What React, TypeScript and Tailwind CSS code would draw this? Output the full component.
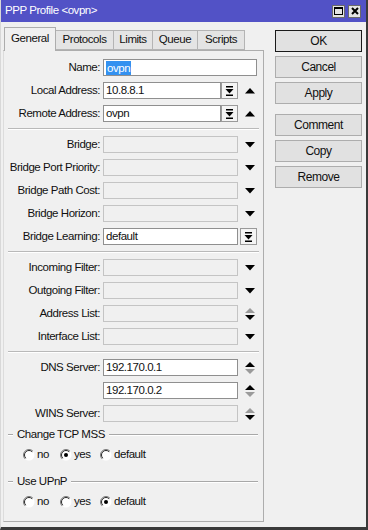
import type { ReactNode } from 'react'

const Tri = ({ dir = 'down', color = '#000' }: { dir?: 'up' | 'down'; color?: string }) => (
  <svg width="10" height="6" viewBox="0 0 10 6">
    {dir === 'down' ? <polygon points="0,0 10,0 5,5.5" fill={color} /> : <polygon points="0,5.5 10,5.5 5,0" fill={color} />}
  </svg>
)

const UpDown = ({ top, bottom }: { top: string; bottom: string }) => (
  <svg width="10" height="12" viewBox="0 0 10 12">
    <polygon points="0,5 10,5 5,0" fill={top} />
    <polygon points="0,7 10,7 5,12" fill={bottom} />
  </svg>
)

const DropBtn = ({ className = '' }: { className?: string }) => (
  <div className={`w-[17px] h-[17px] border border-[#9a9a9a] bg-[#f4f4f4] flex items-center justify-center ${className}`}>
    <svg width="9" height="10" viewBox="0 0 9 10">
      <rect x="1" y="0" width="7" height="1.5" fill="#000" />
      <polygon points="0.5,3 8.5,3 4.5,7.5" fill="#000" />
      <rect x="1" y="8.5" width="7" height="1.5" fill="#000" />
    </svg>
  </div>
)

const Field = ({ w, value, disabled, selected }: { w: string; value?: string; disabled?: boolean; selected?: boolean }) => (
  <div
    className={`${w} h-[17px] border flex items-center pl-[2px] ${
      disabled ? 'bg-[#f0f0f0] border-[#c4c4c4]' : 'bg-white border-[#8f8f8f]'
    }`}
  >
    {selected ? <span className="bg-[#3391f0] text-white px-[1px] leading-[14px]">{value}</span> : value}
  </div>
)

const Row = ({ label, children }: { label?: string; children: ReactNode }) => (
  <div className="flex items-center h-[17px]">
    <div className="w-[99px] pr-[3px] text-right whitespace-nowrap">{label}</div>
    {children}
  </div>
)

const Arrow = ({ children }: { children: ReactNode }) => (
  <div className="w-[24px] flex justify-center">{children}</div>
)

const Sep = () => <div className="mx-[4px] h-[2px] border-t border-[#b9b9b9] border-b border-b-white" />

const Radio = ({ checked }: { checked?: boolean }) => (
  <svg width="12" height="12" viewBox="0 0 12 12">
    <circle cx="6" cy="6" r="5.5" fill="#fff" />
    <path d="M 9.9 2.1 A 5.5 5.5 0 0 0 2.1 9.9" fill="none" stroke="#7a7a7a" strokeWidth="1" />
    <path d="M 9.2 2.8 A 4.5 4.5 0 0 0 2.8 9.2" fill="none" stroke="#2a2a2a" strokeWidth="1" />
    {checked && <circle cx="6" cy="6" r="2" fill="#000" />}
  </svg>
)

const Group = ({ title, value }: { title: string; value: string }) => (
  <>
    <div className="flex items-center h-[12px] mt-[1px] mx-[4px]">
      <div className="w-[5px] h-[2px] border-t border-[#a8a8a8] border-b border-b-white" />
      <span className="px-[4px] whitespace-nowrap">{title}</span>
      <div className="flex-1 mr-[1px] h-[2px] border-t border-[#a8a8a8] border-b border-b-white" />
    </div>
    <div className="flex items-center h-[14px] mt-[1px] ml-[19px]">
      {[
        ['no', 'w-[37px]'],
        ['yes', 'w-[40px]'],
        ['default', 'w-[60px]'],
      ].map(([opt, w]) => (
        <div key={opt} className={`${w} flex items-center gap-[2px]`}>
          <Radio checked={opt === value} />
          <span>{opt}</span>
        </div>
      ))}
    </div>
  </>
)

const tabs = ['Protocols', 'Limits', 'Queue', 'Scripts']
const tabW = ['w-[58px]', 'w-[39px]', 'w-[45px]', 'w-[47px]']

const Btn = ({ label, def }: { label: string; def?: boolean }) => (
  <div
    className={`h-[22px] flex items-center justify-center bg-[#e1e1e1] border ${
      def ? 'border-[#1a1a1a]' : 'border-[#adadad]'
    } text-[12px]`}
  >
    {label}
  </div>
)

export default function App() {
  return (
    <div className="w-[368px] h-[530px] bg-[#f0f0f0] border-l border-l-[#d8d8d8] border-r-2 border-r-[#3a3a3a] border-b-[3px] border-b-[#3a3a3a] flex flex-col text-[11.5px] text-[#111] font-['Liberation_Sans',Arial,sans-serif] tracking-[-0.45px] overflow-hidden">
      {/* title bar */}
      <div className="h-[22px] shrink-0 bg-[#5252c6] flex items-center pl-[4px] pr-[5px] text-white text-[11.5px]">
        <span className="flex-1">PPP Profile &lt;ovpn&gt;</span>
        <div className="flex gap-[3px]">
          <div className="w-[13px] h-[13px] bg-[#e4e4e4] border border-[#6a6a6a] flex items-center justify-center">
            <svg width="9" height="8" viewBox="0 0 9 8">
              <rect x="0.5" y="0.5" width="8" height="7" fill="none" stroke="#000" />
              <rect x="0" y="0" width="9" height="2" fill="#000" />
            </svg>
          </div>
          <div className="w-[13px] h-[13px] bg-[#e4e4e4] border border-[#6a6a6a] flex items-center justify-center">
            <svg width="8" height="8" viewBox="0 0 8 8">
              <path d="M1 1 L7 7 M7 1 L1 7" stroke="#000" strokeWidth="2" />
            </svg>
          </div>
        </div>
      </div>

      <div className="flex flex-1">
        {/* left: tabs + panel */}
        <div className="ml-[2px] w-[261px] pt-[5px] flex flex-col">
          <div className="flex items-end h-[23px] pl-[1px]">
            <div className="relative z-10 w-[52px] h-[24px] mb-[-1px] bg-[#f0f0f0] border border-b-0 border-[#adadad] flex items-center justify-center pb-[2px]">
              General
            </div>
            {tabs.map((t, i) => (
              <div
                key={t}
                className={`${tabW[i]} h-[20px] bg-[#e4e4e4] border border-l-0 border-[#b4b4b4] flex items-center justify-center`}
              >
                {t}
              </div>
            ))}
          </div>
          <div className="h-[472px] border border-[#adadad] border-l-[#dcdcdc] pt-[8px] flex flex-col gap-[6px]">
            <Row label="Name:">
              <Field w="w-[154px]" value="ovpn" selected />
            </Row>
            <Row label="Local Address:">
              <Field w="w-[118px]" value="10.8.8.1" />
              <DropBtn />
              <Arrow>
                <Tri dir="up" />
              </Arrow>
            </Row>
            <Row label="Remote Address:">
              <Field w="w-[118px]" value="ovpn" />
              <DropBtn />
              <Arrow>
                <Tri dir="up" />
              </Arrow>
            </Row>
            <Sep />
            {['Bridge:', 'Bridge Port Priority:', 'Bridge Path Cost:', 'Bridge Horizon:'].map((l) => (
              <Row key={l} label={l}>
                <Field w="w-[135px]" disabled />
                <Arrow>
                  <Tri />
                </Arrow>
              </Row>
            ))}
            <Row label="Bridge Learning:">
              <Field w="w-[135px]" value="default" />
              <DropBtn className="ml-[2px]" />
            </Row>
            <Sep />
            <Row label="Incoming Filter:">
              <Field w="w-[135px]" disabled />
              <Arrow>
                <Tri />
              </Arrow>
            </Row>
            <Row label="Outgoing Filter:">
              <Field w="w-[135px]" disabled />
              <Arrow>
                <Tri />
              </Arrow>
            </Row>
            <Row label="Address List:">
              <Field w="w-[135px]" disabled />
              <Arrow>
                <UpDown top="#9a9a9a" bottom="#000" />
              </Arrow>
            </Row>
            <Row label="Interface List:">
              <Field w="w-[135px]" disabled />
              <Arrow>
                <Tri />
              </Arrow>
            </Row>
            <Sep />
            <Row label="DNS Server:">
              <Field w="w-[135px]" value="192.170.0.1" />
              <Arrow>
                <UpDown top="#000" bottom="#9a9a9a" />
              </Arrow>
            </Row>
            <Row>
              <Field w="w-[135px]" value="192.170.0.2" />
              <Arrow>
                <UpDown top="#000" bottom="#9a9a9a" />
              </Arrow>
            </Row>
            <Row label="WINS Server:">
              <Field w="w-[135px]" disabled />
              <Arrow>
                <UpDown top="#9a9a9a" bottom="#000" />
              </Arrow>
            </Row>
            <Group title="Change TCP MSS" value="yes" />
            <div className="h-0 mt-[1px]" />
            <Group title="Use UPnP" value="default" />
          </div>
        </div>

        {/* right: buttons */}
        <div className="ml-[11px] w-[87px] pt-[8px] flex flex-col gap-[4px]">
          <Btn label="OK" def />
          <Btn label="Cancel" />
          <Btn label="Apply" />
          <div className="h-[2px]" />
          <Btn label="Comment" />
          <Btn label="Copy" />
          <Btn label="Remove" />
        </div>
      </div>
    </div>
  )
}
